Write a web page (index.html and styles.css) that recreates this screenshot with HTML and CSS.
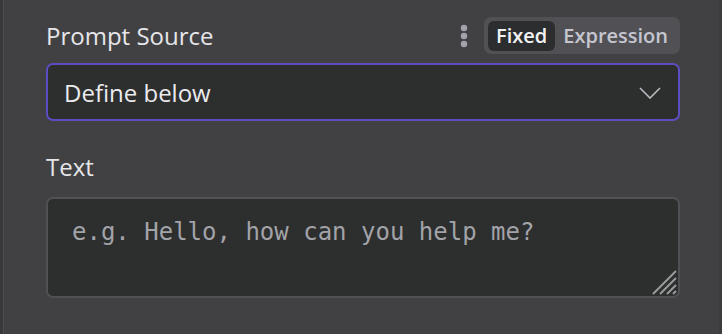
FILE: index.html
```html
<!DOCTYPE html>
<html>
<head>
<meta charset="utf-8">
<link rel="stylesheet" href="styles.css">
</head>
<body>
<div class="panel">
  <div class="field">
    <div class="field-head">
      <span class="label">Prompt Source</span>
      <div class="head-right">
        <svg class="dots" width="8" height="24" viewBox="0 0 8 24">
          <circle cx="4" cy="4" r="3.2" fill="#a3a4ab"/>
          <circle cx="4" cy="12" r="3.2" fill="#a3a4ab"/>
          <circle cx="4" cy="20" r="3.2" fill="#a3a4ab"/>
        </svg>
        <div class="toggle">
          <span class="opt active">Fixed</span>
          <span class="opt">Expression</span>
        </div>
      </div>
    </div>
    <div class="select">
      <span>Define below</span>
      <svg class="chev" width="22" height="12" viewBox="0 0 22 12">
        <path d="M1 1 L11 11 L21 1" fill="none" stroke="#b9bac0" stroke-width="1.6"/>
      </svg>
    </div>
  </div>
  <div class="field text-field">
    <div class="label">Text</div>
    <div class="textarea">
      <span class="placeholder">e.g. Hello, how can you help me?</span>
      <svg class="grip" width="26" height="26" viewBox="0 0 26 26">
        <path d="M2 25 L25 2 M9 25 L25 9 M16 25 L25 16 M22 25 L25 22" stroke="#9a9a9c" stroke-width="2"/>
      </svg>
    </div>
  </div>
</div>
</body>
</html>
```
FILE: styles.css
```css
* { box-sizing: border-box; }
html, body {
  margin: 0;
  padding: 0;
  width: 722px;
  height: 334px;
  overflow: hidden;
  background: #414143;
}
body {
  font-family: "Open Sans", "Noto Sans", sans-serif;
  color: #e4e4e8;
}
.panel {
  height: 334px;
  margin-left: 3px;
  border-left: 1px solid #4d4d50;
  border-right: 3px solid #3c3c3e;
  padding: 17px 39px 0 42px;
  box-shadow: -3px 0 0 #39393b;
}
.field-head {
  display: flex;
  align-items: center;
  justify-content: space-between;
  height: 37px;
}
.label {
  font-size: 24px;
  line-height: 30px;
  color: #e6e6ea;
}
.head-right {
  display: flex;
  align-items: center;
  gap: 16px;
}
.dots { display: block; margin-top: 1px; }
.toggle {
  display: flex;
  align-items: center;
  background: #515155;
  border-radius: 7px;
  padding: 4px;
  height: 37px;
}
.opt {
  font-size: 20px;
  font-weight: 600;
  line-height: 30px;
  padding: 0 8px;
  color: #c5c6d0;
  border-radius: 6px;
}
.opt.active {
  background: #2c2d2f;
  color: #f2f2f4;
}
.select {
  margin-top: 9px;
  height: 58px;
  border: 2px solid #5a4ec2;
  border-radius: 7px;
  background: #2d2e2e;
  display: flex;
  align-items: center;
  justify-content: space-between;
  padding: 0 17px 0 16px;
  font-size: 24px;
  color: #ebebef;
}
.chev { display: block; margin-top: 2px; }
.text-field { margin-top: 30px; }
.text-field .label { line-height: 32px; }
.textarea {
  position: relative;
  margin-top: 14px;
  height: 101px;
  border: 2px solid #505154;
  border-radius: 7px;
  background: #2d2e2e;
  padding: 17px 24px;
}
.placeholder {
  font-family: "DejaVu Sans Mono", monospace;
  font-size: 24px;
  line-height: 32px;
  color: #a2a3a8;
}
.grip {
  position: absolute;
  right: 1px;
  bottom: 1px;
  display: block;
}
```
